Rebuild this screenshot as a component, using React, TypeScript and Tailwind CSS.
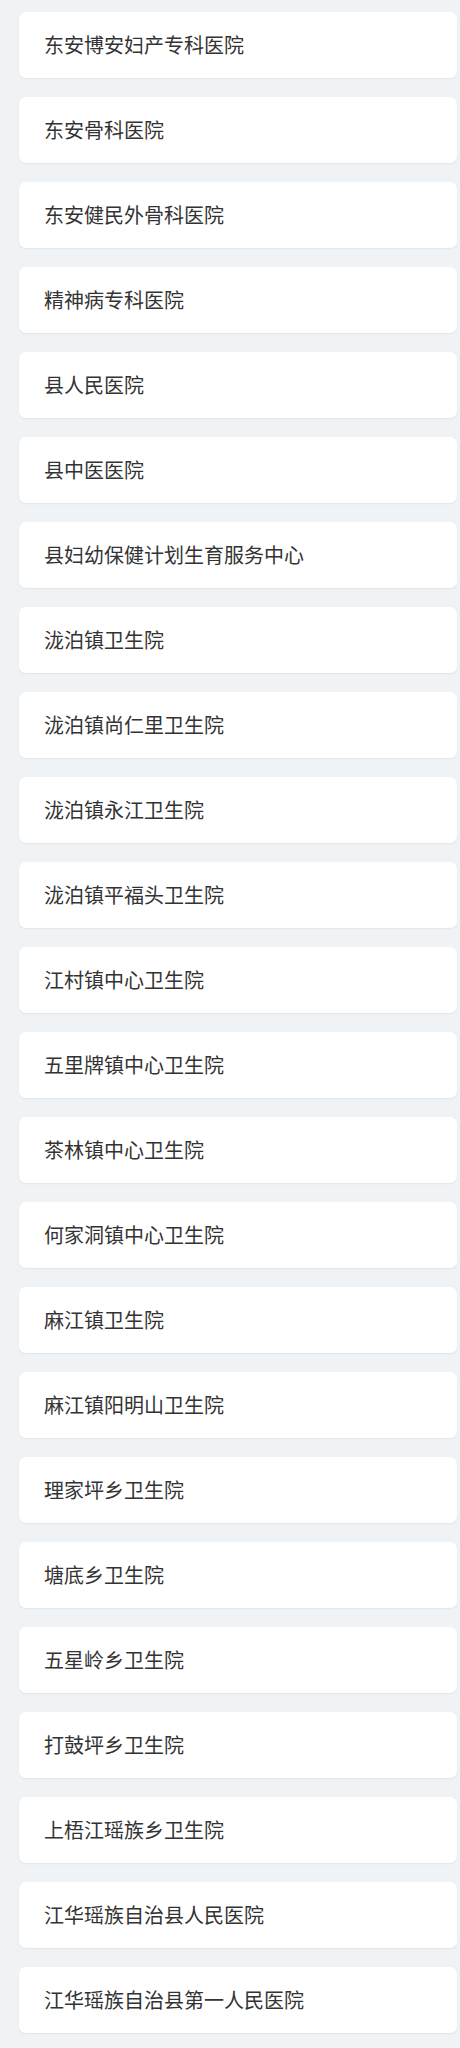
const hospitals = [
  "东安博安妇产专科医院",
  "东安骨科医院",
  "东安健民外骨科医院",
  "精神病专科医院",
  "县人民医院",
  "县中医医院",
  "县妇幼保健计划生育服务中心",
  "泷泊镇卫生院",
  "泷泊镇尚仁里卫生院",
  "泷泊镇永江卫生院",
  "泷泊镇平福头卫生院",
  "江村镇中心卫生院",
  "五里牌镇中心卫生院",
  "茶林镇中心卫生院",
  "何家洞镇中心卫生院",
  "麻江镇卫生院",
  "麻江镇阳明山卫生院",
  "理家坪乡卫生院",
  "塘底乡卫生院",
  "五星岭乡卫生院",
  "打鼓坪乡卫生院",
  "上梧江瑶族乡卫生院",
  "江华瑶族自治县人民医院",
  "江华瑶族自治县第一人民医院",
];

export default function App() {
  return (
    <div
      className="min-h-[2048px] bg-[#eff3f6] pt-[12px] pb-[14px] pl-[19px] pr-[3px]"
      style={{ fontFamily: '"Noto Sans CJK SC", "Noto Sans", sans-serif' }}
    >
      <div className="flex flex-col gap-[19px]">
        {hospitals.map((name) => (
          <div
            key={name}
            className="flex h-[66px] items-center rounded-[7px] bg-white pl-[25px] text-[20px] text-[#333] shadow-[0_1px_2px_rgba(0,0,0,0.06)]"
          >
            {name}
          </div>
        ))}
      </div>
    </div>
  );
}
